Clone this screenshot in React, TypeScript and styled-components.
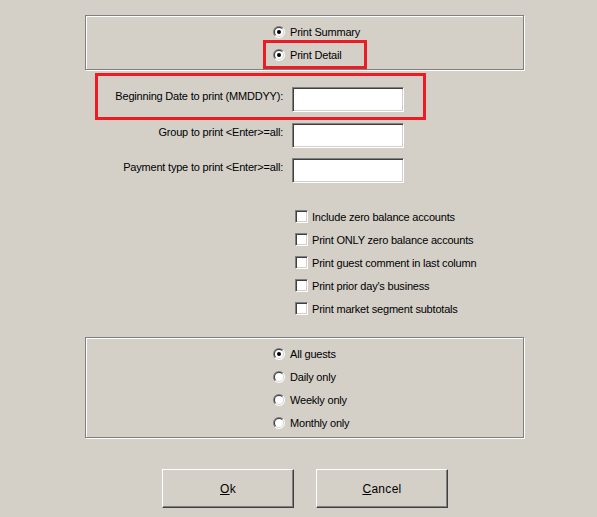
import React from "react";
import styled, { createGlobalStyle } from "styled-components";

const GlobalStyle = createGlobalStyle`
  html, body {
    margin: 0;
    padding: 0;
    background: #d4d0c8;
  }
  body {
    font-family: "Liberation Sans", Arial, sans-serif;
    font-size: 11px;
    color: #000;
  }
`;

const RED = "#ed1c24";

const Page = styled.div`
  width: 597px;
  height: 517px;
  box-sizing: border-box;
  padding: 15px 0 0 85px;
  display: flex;
  flex-direction: column;
  align-items: flex-start;
  overflow: hidden;
  letter-spacing: -0.2px;
`;

const GroupBox = styled.div<{ $height: number; $padTop: number }>`
  width: 439px;
  height: ${(p) => p.$height}px;
  box-sizing: border-box;
  border: 1px solid #808080;
  box-shadow: inset 1px 1px 0 #fff, 1px 1px 0 #fff;
  padding-top: ${(p) => p.$padTop}px;
  display: flex;
  flex-direction: column;
  align-items: flex-start;
`;

const RadioRow = styled.label<{ $height: number }>`
  display: flex;
  align-items: center;
  gap: 5px;
  height: ${(p) => p.$height}px;
  margin-left: 187px;
  white-space: nowrap;
`;

const RadioHighlight = styled.div`
  box-sizing: border-box;
  width: 104px;
  height: 29px;
  margin-left: 177px;
  border: 3px solid ${RED};
  padding-left: 7px;
  display: flex;
  align-items: center;
  gap: 5px;
  white-space: nowrap;
`;

const FieldHighlight = styled.div`
  box-sizing: border-box;
  width: 331px;
  margin: 3px 0 0 10px;
  border: 3px solid ${RED};
  padding: 11px 0 5px 0;
`;

const FieldRow = styled.div<{ $indent?: number; $top?: number }>`
  display: flex;
  align-items: flex-start;
  gap: 9px;
  margin-left: ${(p) => p.$indent ?? 0}px;
  margin-top: ${(p) => p.$top ?? 0}px;
`;

const FieldLabel = styled.span`
  width: 185px;
  text-align: right;
  line-height: 13px;
  margin-top: 3px;
  white-space: nowrap;
`;

const TextBox = styled.div`
  box-sizing: border-box;
  width: 112px;
  height: 25px;
  background: #fff;
  border-style: solid;
  border-width: 1px;
  border-color: #808080 #fff #fff #808080;
  box-shadow: inset 1px 1px 0 #404040, inset -1px -1px 0 #d4d0c8;
`;

const CheckList = styled.div`
  margin: 22px 0 0 210px;
  display: flex;
  flex-direction: column;
`;

const CheckRow = styled.label`
  display: flex;
  align-items: center;
  gap: 4px;
  height: 23px;
  white-space: nowrap;
`;

const CheckBox = styled.span`
  box-sizing: border-box;
  width: 13px;
  height: 13px;
  flex: none;
  background: #fff;
  border-style: solid;
  border-width: 1px;
  border-color: #808080 #fff #fff #808080;
  box-shadow: inset 1px 1px 0 #404040, inset -1px -1px 0 #d4d0c8;
`;

const BottomGroup = styled(GroupBox)`
  margin-top: 17px;
`;

const ButtonRow = styled.div`
  width: 440px;
  margin-top: 31px;
  display: flex;
  justify-content: center;
  gap: 22px;
`;

const Button = styled.button`
  box-sizing: border-box;
  width: 132px;
  height: 39px;
  padding: 0;
  background: #d4d0c8;
  border-style: solid;
  border-width: 1px;
  border-color: #fff #404040 #404040 #fff;
  box-shadow: inset -1px -1px 0 #808080;
  font-family: "Liberation Sans", Arial, sans-serif;
  font-size: 12px;
  letter-spacing: 0.3px;
  color: #000;
  u {
    text-decoration: underline;
  }
`;

const RadioIcon = ({ checked }: { checked?: boolean }) => (
  <svg width="12" height="12" viewBox="0 0 12 12" style={{ flex: "none" }}>
    <path d="M1.757 10.243 A6 6 0 0 1 10.243 1.757 Z" fill="#808080" />
    <path d="M10.243 1.757 A6 6 0 0 1 1.757 10.243 Z" fill="#ffffff" />
    <path d="M2.464 9.536 A5 5 0 0 1 9.536 2.464 Z" fill="#404040" />
    <path d="M9.536 2.464 A5 5 0 0 1 2.464 9.536 Z" fill="#d4d0c8" />
    <circle cx="6" cy="6" r="4" fill="#ffffff" />
    {checked && <circle cx="6" cy="6" r="2" fill="#000" />}
  </svg>
);

const checks = [
  "Include zero balance accounts",
  "Print ONLY zero balance accounts",
  "Print guest comment in last column",
  "Print prior day's business",
  "Print market segment subtotals",
];

const frequencies = ["All guests", "Daily only", "Weekly only", "Monthly only"];

export default function App() {
  return (
    <>
      <GlobalStyle />
      <Page>
        <GroupBox $height={55} $padTop={8}>
          <RadioRow $height={16}>
            <RadioIcon checked />
            <span>Print Summary</span>
          </RadioRow>
          <RadioHighlight>
            <RadioIcon checked />
            <span>Print Detail</span>
          </RadioHighlight>
        </GroupBox>

        <FieldHighlight>
          <FieldRow>
            <FieldLabel>Beginning Date to print (MMDDYY):</FieldLabel>
            <TextBox />
          </FieldRow>
        </FieldHighlight>
        <FieldRow $indent={13} $top={3}>
          <FieldLabel>Group to print &lt;Enter&gt;=all:</FieldLabel>
          <TextBox />
        </FieldRow>
        <FieldRow $indent={13} $top={10}>
          <FieldLabel>Payment type to print &lt;Enter&gt;=all:</FieldLabel>
          <TextBox />
        </FieldRow>

        <CheckList>
          {checks.map((c) => (
            <CheckRow key={c}>
              <CheckBox />
              <span>{c}</span>
            </CheckRow>
          ))}
        </CheckList>

        <BottomGroup $height={101} $padTop={4}>
          {frequencies.map((f, i) => (
            <RadioRow key={f} $height={23}>
              <RadioIcon checked={i === 0} />
              <span>{f}</span>
            </RadioRow>
          ))}
        </BottomGroup>

        <ButtonRow>
          <Button>
            <u>O</u>k
          </Button>
          <Button>
            <u>C</u>ancel
          </Button>
        </ButtonRow>
      </Page>
    </>
  );
}
